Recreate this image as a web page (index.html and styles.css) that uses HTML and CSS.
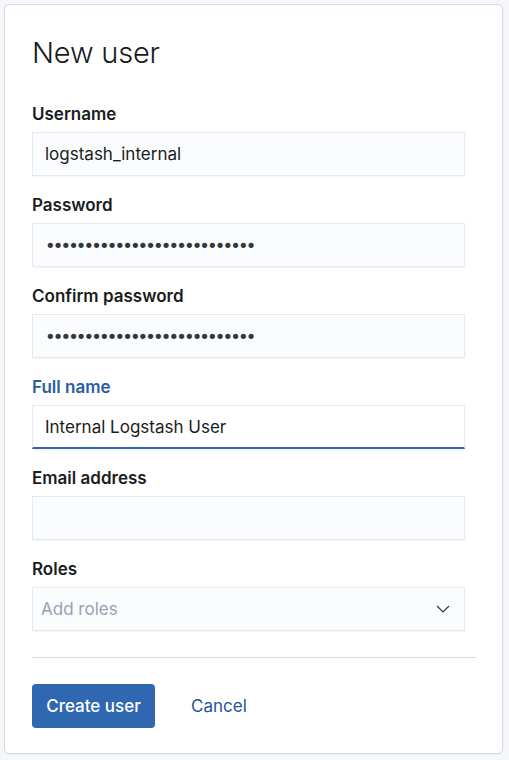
FILE: index.html
```html
<!DOCTYPE html>
<html>
<head>
<meta charset="utf-8">
<link rel="stylesheet" href="styles.css">
</head>
<body>
<div class="card">
  <h1 class="title">New user</h1>
  <div class="row">
    <label class="label">Username</label>
    <div class="input">logstash_internal</div>
  </div>
  <div class="row">
    <label class="label">Password</label>
    <div class="input dots">•••••••••••••••••••••••••••</div>
  </div>
  <div class="row">
    <label class="label">Confirm password</label>
    <div class="input dots">•••••••••••••••••••••••••••</div>
  </div>
  <div class="row">
    <label class="label focus-label">Full name</label>
    <div class="input focused">Internal Logstash User</div>
  </div>
  <div class="row">
    <label class="label">Email address</label>
    <div class="input"></div>
  </div>
  <div class="row last">
    <label class="label">Roles</label>
    <div class="input combo">
      <span class="placeholder">Add roles</span>
      <svg class="chev" width="14" height="8" viewBox="0 0 14 8"><path d="M1 1 L7 7 L13 1" fill="none" stroke="#343741" stroke-width="1.2"/></svg>
    </div>
  </div>
  <hr class="divider">
  <div class="actions">
    <button class="btn">Create user</button>
    <span class="link">Cancel</span>
  </div>
</div>
</body>
</html>
```
FILE: styles.css
```css
html, body { margin: 0; padding: 0; }
body {
  background: #f5f7fa;
  padding: 4px 6px 6px 4px;
  font-family: Inter, "Noto Sans", sans-serif;
  color: #1a1c21;
}
.card {
  background: #fff;
  border: 1px solid #d3dae6;
  border-radius: 5px;
  padding: 28px 26px 25px 27px;
  box-shadow: 0 1px 2px rgba(0,0,0,0.04);
}
.title {
  margin: 0 0 29px 0;
  font-size: 29px;
  line-height: 40px;
  font-weight: 300;
  letter-spacing: -0.2px;
}
.row {
  display: flex;
  flex-direction: column;
  gap: 6px;
  width: 433px;
  margin-bottom: 17px;
}
.row.last { margin-bottom: 26px; }
.label {
  font-size: 17px;
  line-height: 24px;
  font-weight: 600;
  color: #1a1c21;
}
.focus-label { color: #2a5d9f; }
.input {
  box-sizing: border-box;
  height: 44px;
  background: #fbfcfd;
  border: 1px solid #e6e9ef;
  box-shadow: 0 1px 2px -1px rgba(152,162,179,0.3);
  padding: 0 12px;
  display: flex;
  align-items: center;
  font-size: 17px;
  color: #1a1c21;
}
.dots {
  font-size: 18px;
  letter-spacing: -2.9px;
  font-family: "DejaVu Sans", sans-serif;
  color: #343741;
}
.focused {
  background: #fff;
  border-bottom: 2px solid #2f68b0;
}
.combo {
  justify-content: space-between;
  padding: 0 14px 0 8px;
}
.placeholder { color: #98a2b3; }
.divider {
  border: 0;
  border-top: 1px solid #d3dae6;
  margin: 0 0 26px 0;
}
.actions {
  display: flex;
  align-items: center;
  gap: 36px;
}
.btn {
  font-family: inherit;
  font-size: 17px;
  font-weight: 500;
  color: #fff;
  background: #2f68b0;
  border: 0;
  border-radius: 4px;
  height: 44px;
  width: 123px;
  padding: 0;
}
.link {
  font-size: 17px;
  color: #1e5596;
}
```
